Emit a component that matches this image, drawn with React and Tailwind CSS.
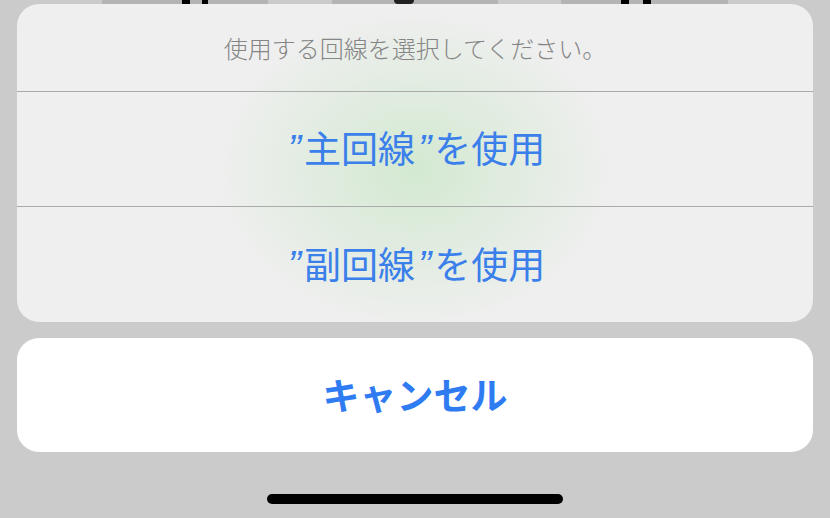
import React from 'react';

const jp = { fontFamily: '"Noto Sans CJK JP", "Noto Sans", sans-serif' };

function Quote({ children }) {
  return (
    <span
      className="inline-block px-[3px] text-[40px] italic leading-none"
      style={{ fontFamily: '"Liberation Sans", sans-serif' }}
    >
      {children}
    </span>
  );
}

function Option({ name, last }) {
  return (
    <button
      type="button"
      className={`flex h-[115px] w-full items-center justify-center text-[37px] text-[#3a7fea] ${last ? '' : 'border-b border-[#ababab]'}`}
    >
      <span className="leading-none">
        <Quote>&#8221;</Quote>
        {name}
        <Quote>&#8221;</Quote>を使用
      </span>
    </button>
  );
}

export default function App() {
  return (
    <div className="relative h-[518px] w-[830px] overflow-hidden bg-[#cbcbcb]" style={jp}>
      {/* keys peeking out from behind the sheet */}
      <div className="absolute left-0 top-0 flex h-[6px] w-full">
        <div className="ml-[102px] flex h-full w-[166px] justify-center bg-[#b4b4b4]">
          <div className="ml-[20px] h-full w-[8px] bg-black" />
          <div className="ml-[12px] h-full w-[6px] bg-black" />
        </div>
        <div className="ml-[64px] flex h-full w-[166px] bg-[#b4b4b4]">
          <div className="ml-[62px] h-[4px] w-[20px] rounded-b-full bg-[#222]" />
        </div>
        <div className="ml-[63px] flex h-full w-[167px] bg-[#b4b4b4]">
          <div className="ml-[60px] h-full w-[8px] bg-black" />
          <div className="ml-[14px] h-full w-[8px] bg-black" />
        </div>
      </div>

      <div className="relative flex h-full flex-col px-[17px] pt-[4px]">
        <div
          className="overflow-hidden rounded-[22px] bg-[#efefef]"
          style={{
            backgroundImage:
              'radial-gradient(ellipse 200px 160px at 50% 52%, rgba(206,232,204,0.85), rgba(239,239,239,0) 100%)',
          }}
        >
          <div className="flex h-[88px] items-center justify-center border-b border-[#ababab] text-[24px] font-light text-[#858585]">
            使用する回線を選択してください。
          </div>
          <Option name="主回線" />
          <Option name="副回線" last />
        </div>

        <button
          type="button"
          className="mt-[16px] flex h-[114px] items-center justify-center rounded-[22px] bg-white text-[37px] font-semibold text-[#2f7bf2]"
        >
          キャンセル
        </button>

        <div className="flex flex-1 items-start justify-center pt-[42px]">
          <div className="h-[10px] w-[296px] rounded-full bg-black" />
        </div>
      </div>
    </div>
  );
}
